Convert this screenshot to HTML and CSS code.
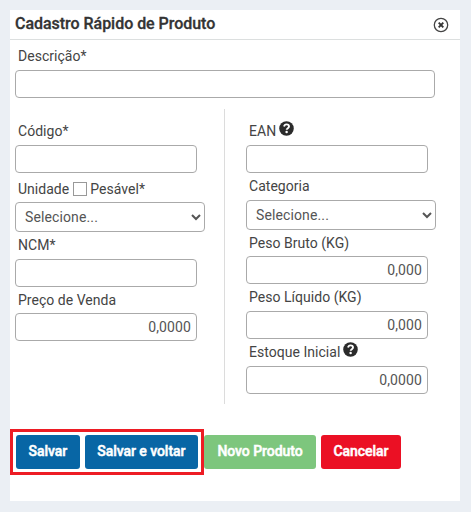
FILE: index.html
```html
<!DOCTYPE html>
<html lang="pt-BR">
<head>
  <meta charset="UTF-8">
  <meta name="viewport" content="width=device-width, initial-scale=1.0">
  <title>Cadastro Rápido de Produto</title>
  <link rel="stylesheet" href="styles.css">
</head>
<body>

  <div class="modal">
    <div class="modal-header">
      <h1 class="modal-title">Cadastro Rápido de Produto</h1>
      <svg class="close-icon" viewBox="0 0 16 16" width="16" height="16">
        <circle cx="8" cy="8" r="6.7" fill="none" stroke="#444" stroke-width="1.3"/>
        <path d="M5.7 5.7L10.3 10.3M10.3 5.7L5.7 10.3" stroke="#333" stroke-width="1.9"/>
      </svg>
    </div>

    <form class="modal-body">
      <label class="label label-top" for="descricao">Descrição*</label>
      <input type="text" id="descricao" class="input input-full">

      <div class="columns">
        <div class="column column-left">
          <label class="label label-first" for="codigo">Código*</label>
          <input type="text" id="codigo" class="input">

          <div class="label label-unit">
            <span>Unidade</span>
            <input type="checkbox" id="pesavel" class="checkbox">
            <label for="pesavel">Pesável*</label>
          </div>
          <select class="select">
            <option>Selecione...</option>
          </select>

          <label class="label" for="ncm">NCM*</label>
          <input type="text" id="ncm" class="input">

          <label class="label label-short" for="preco">Preço de Venda</label>
          <input type="text" id="preco" class="input input-number" value="0,0000">
        </div>

        <div class="column column-right">
          <label class="label label-first" for="ean">EAN
            <svg class="help-icon" viewBox="0 0 512 512" width="15" height="15">
              <circle cx="256" cy="256" r="248" fill="#2b2b2b"/>
              <path d="M172 190C184 138 212 116 256 116C306 116 341 145 341 187C341 242 262 247 262 300" fill="none" stroke="#fff" stroke-width="66"/>
              <circle cx="260" cy="376" r="42" fill="#fff"/>
            </svg>
          </label>
          <input type="text" id="ean" class="input">

          <label class="label" for="categoria">Categoria</label>
          <select id="categoria" class="select">
            <option>Selecione...</option>
          </select>

          <label class="label label-short" for="bruto">Peso Bruto (KG)</label>
          <input type="text" id="bruto" class="input input-number" value="0,000">

          <label class="label" for="liquido">Peso Líquido (KG)</label>
          <input type="text" id="liquido" class="input input-number" value="0,000">

          <label class="label" for="estoque">Estoque Inicial
            <svg class="help-icon" viewBox="0 0 512 512" width="15" height="15">
              <circle cx="256" cy="256" r="248" fill="#2b2b2b"/>
              <path d="M172 190C184 138 212 116 256 116C306 116 341 145 341 187C341 242 262 247 262 300" fill="none" stroke="#fff" stroke-width="66"/>
              <circle cx="260" cy="376" r="42" fill="#fff"/>
            </svg>
          </label>
          <input type="text" id="estoque" class="input input-number" value="0,0000">
        </div>
      </div>
    </form>

    <div class="modal-footer">
      <div class="highlight">
        <button type="button" class="btn btn-save">Salvar</button>
        <button type="button" class="btn btn-save btn-save-back">Salvar e voltar</button>
      </div>
      <button type="button" class="btn btn-new">Novo Produto</button>
      <button type="button" class="btn btn-cancel">Cancelar</button>
    </div>
  </div>

</body>
</html>
```

FILE: styles.css
```css
* {
  box-sizing: border-box;
}

body {
  margin: 0;
  padding: 10px;
  background-color: #ebeff4;
  font-family: Roboto, sans-serif;
  font-size: 14px;
  color: #444;
}

.modal {
  width: 450px;
  height: 491px;
  background-color: #fff;
}

.modal-header {
  display: flex;
  align-items: center;
  justify-content: space-between;
  height: 30px;
  padding: 0 11px 0 5px;
  border-bottom: 1px solid #dcdfdf;
}

.modal-title {
  margin: 0;
  padding-bottom: 2px;
  font-size: 16px;
  font-weight: 500;
  line-height: 26px;
  letter-spacing: -0.03px;
  color: #333;
  -webkit-text-stroke: 0.3px #333;
}

.modal-body {
  padding-left: 5px;
}

.label {
  display: flex;
  align-items: center;
  height: 27px;
  padding-left: 3px;
  padding-bottom: 1px;
  letter-spacing: 0.03px;
  white-space: nowrap;
}

.label-top {
  height: 30px;
  padding-top: 3px;
}

.label-first {
  height: 36px;
  padding-top: 9px;
}

.label-unit {
  height: 29px;
  padding-top: 4px;
}

.label-short {
  height: 26px;
  padding-bottom: 0;
}

.input,
.select {
  display: block;
  width: 182px;
  height: 28px;
  margin: 0;
  padding: 0 5px;
  border: 1px solid #aaa;
  border-radius: 4px;
  background-color: #fff;
  font-family: Roboto, sans-serif;
  font-size: 14px;
  letter-spacing: 0.12px;
  color: #555;
}

.input-full {
  width: 420px;
}

.input-number {
  text-align: right;
}

.select {
  width: 190px;
  height: 30px;
}

.checkbox {
  appearance: none;
  width: 14px;
  height: 14px;
  margin: 0 3px 0 4px;
  border: 1px solid #999;
  background-color: #fff;
}

.help-icon {
  margin: 0 0 5px 3px;
}

.columns {
  display: flex;
  height: 295px;
  margin-top: 11px;
}

.column-left {
  width: 210px;
  border-right: 1px solid #dcdcdc;
}

.column-right {
  padding-left: 21px;
}

.modal-footer {
  display: flex;
  align-items: center;
  margin-top: 25px;
}

/* red frame around the two save buttons */
.highlight {
  display: flex;
  gap: 5px;
  width: 194px;
  height: 46px;
  padding: 3px;
  border: 3px solid #ed1c24;
}

.btn {
  width: 64px;
  height: 34px;
  padding: 0 0 2px;
  border: 0;
  border-radius: 3px;
  font-family: Roboto, sans-serif;
  font-size: 14px;
  font-weight: 500;
  letter-spacing: -0.05px;
  color: #fff;
  white-space: nowrap;
  -webkit-text-stroke: 0.5px #fff;
}

.btn-save {
  background-color: #0866a5;
}

.btn-save-back {
  width: 114px;
}

.btn-new {
  width: 112px;
  background-color: #7dc67d;
}

.btn-cancel {
  width: 80px;
  margin-left: 5px;
  background-color: #eb1024;
}
```
